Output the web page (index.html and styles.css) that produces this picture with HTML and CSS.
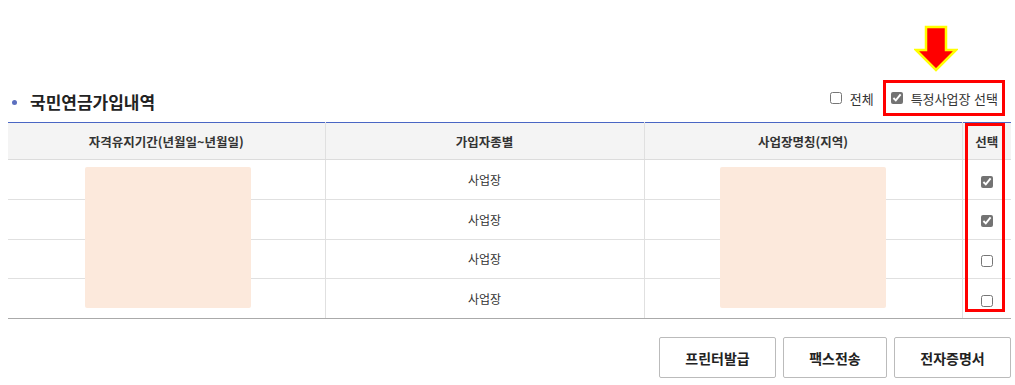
FILE: index.html
```html
<!DOCTYPE html>
<html lang="ko">
<head>
    <meta charset="UTF-8">
    <title>국민연금가입내역</title>
    <link rel="stylesheet" href="styles.css">
</head>
<body>
    <div class="wrap">
        <div class="title-row">
            <h2 class="title"><span class="dot"></span>국민연금가입내역</h2>
            <div class="options">
                <label class="opt"><input type="checkbox"> 전체</label>
                <div class="mark-box">
                    <svg class="arrow" width="44" height="47" viewBox="0 0 44 47">
                        <polygon points="12,2 32,2 32,25 42,25 22,45 2,25 12,25" fill="#ff0000" stroke="#ffff00" stroke-width="2.5" stroke-linejoin="miter"/>
                    </svg>
                    <label class="opt"><input type="checkbox" checked> 특정사업장 선택</label>
                </div>
            </div>
        </div>

        <div class="table-wrap">
            <table class="list">
                <colgroup>
                    <col style="width:317px">
                    <col style="width:319px">
                    <col style="width:318px">
                    <col>
                </colgroup>
                <thead>
                    <tr>
                        <th>자격유지기간(년월일~년월일)</th>
                        <th>가입자종별</th>
                        <th>사업장명칭(지역)</th>
                        <th>선택</th>
                    </tr>
                </thead>
                <tbody>
                    <tr><td></td><td>사업장</td><td></td><td><input type="checkbox" checked></td></tr>
                    <tr><td></td><td>사업장</td><td></td><td><input type="checkbox" checked></td></tr>
                    <tr><td></td><td>사업장</td><td></td><td><input type="checkbox"></td></tr>
                    <tr><td></td><td>사업장</td><td></td><td><input type="checkbox"></td></tr>
                </tbody>
            </table>
            <div class="mask mask-period"></div>
            <div class="mask mask-name"></div>
            <div class="col-mark"></div>
        </div>

        <div class="buttons">
            <button class="btn btn-wide">프린터발급</button>
            <button class="btn">팩스전송</button>
            <button class="btn btn-wide">전자증명서</button>
        </div>
    </div>
</body>
</html>
```

FILE: styles.css
```css
body {
    margin: 0;
    font-family: "Noto Sans CJK KR", "Noto Sans", sans-serif;
    color: #333;
    background: #fff;
}
.wrap {
    padding: 80px 4px 0 8px;
}
.title-row {
    display: flex;
    justify-content: space-between;
    align-items: center;
    height: 42px;
}
.title {
    display: flex;
    align-items: center;
    margin: 0;
    font-size: 17px;
    font-weight: bold;
    color: #222;
}
.dot {
    width: 5px;
    height: 5px;
    border-radius: 50%;
    background: #5b6fbf;
    margin: 2px 13px 0 4px;
}
.options {
    display: flex;
    align-items: center;
    align-self: flex-start;
    margin-right: 6px;
}
.opt {
    display: flex;
    align-items: center;
    gap: 8px;
    font-size: 13px;
    color: #333;
}
.mark-box {
    position: relative;
    display: flex;
    align-items: center;
    height: 36px;
    box-sizing: border-box;
    border: 3px solid #ff0000;
    margin-left: 9px;
    padding: 0 4px 0 5px;
}
.arrow {
    position: absolute;
    left: 28px;
    top: -58px;
}
input[type="checkbox"] {
    width: 12px;
    height: 12px;
    margin: 0;
    accent-color: #737373;
}
.table-wrap {
    position: relative;
}
.list {
    width: 100%;
    border-collapse: collapse;
    table-layout: fixed;
    border-top: 1px solid #4a66c4;
}
.list th,
.list td {
    border-left: 1px solid #e0e0e0;
    border-bottom: 1px solid #e0e0e0;
    text-align: center;
    padding: 0;
}
.list th:first-child,
.list td:first-child {
    border-left: none;
}
.list th {
    height: 36px;
    background: #f4f4f4;
    font-size: 12.5px;
    font-weight: bold;
    color: #333;
    border-bottom-color: #dcdcdc;
}
.list td {
    height: 38.75px;
    font-size: 12px;
    color: #333;
}
.list tbody tr:last-child td {
    border-bottom-color: #aaa;
}
.list td input {
    vertical-align: middle;
}
.mask {
    position: absolute;
    top: 45px;
    width: 166px;
    height: 141px;
    background: #fce9dc;
    border-radius: 2px;
}
.mask-period {
    left: 77px;
}
.mask-name {
    left: 712px;
}
.col-mark {
    position: absolute;
    left: 957px;
    top: 1px;
    width: 40px;
    height: 189px;
    box-sizing: border-box;
    border: 3px solid #ff0000;
}
.buttons {
    display: flex;
    justify-content: flex-end;
    gap: 7px;
    margin-top: 18px;
}
.btn {
    height: 41px;
    width: 104px;
    background: #fff;
    border: 1px solid #bbb;
    border-radius: 2px;
    font-family: inherit;
    font-size: 14px;
    font-weight: bold;
    color: #222;
}
.btn-wide {
    width: 117px;
}
```
